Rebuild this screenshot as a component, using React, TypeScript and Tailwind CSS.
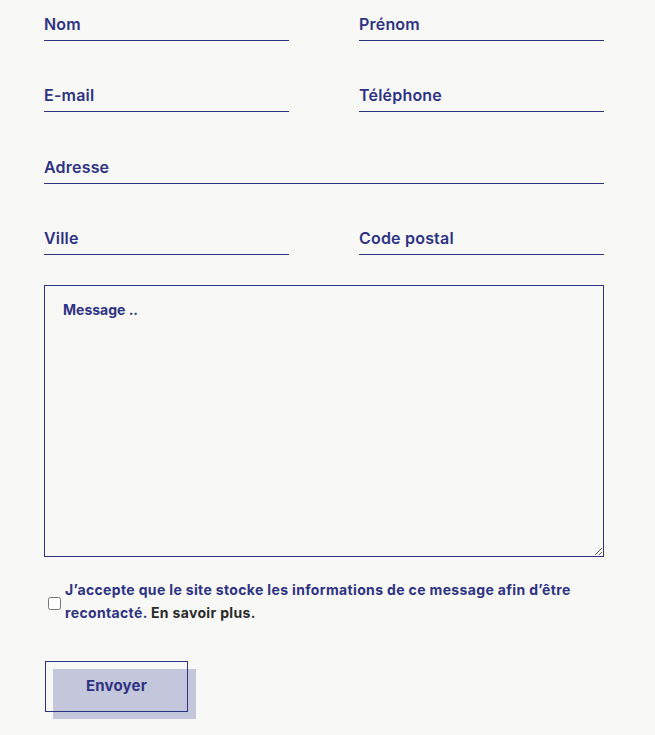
import { useState } from 'react';

const navy = 'text-[#2e3283]';

type FieldProps = {
  label: string;
  className?: string;
};

const Field = ({ label, className }: FieldProps) => {
  return (
    <label className={`block border-b border-[#2e3283] pb-[4px] ${className ?? ''}`}>
      <input
        type="text"
        placeholder={label}
        className={`block h-[24px] w-full bg-transparent text-[16px] font-semibold leading-[24px] tracking-[0.2px] outline-none ${navy} placeholder:text-[#2e3283]`}
      />
    </label>
  );
};

const App = () => {
  const [accepted, setAccepted] = useState<boolean>(false);

  return (
    <div
      className="min-h-screen bg-[#f8f8f6] px-[44px] pt-[12px]"
      style={{ fontFamily: 'Inter, "Noto Sans", sans-serif' }}
    >
      <form className="w-[560px]" onSubmit={(e) => e.preventDefault()}>
        <div className="grid grid-cols-[245px_245px] justify-between gap-y-[42px]">
          <Field label="Nom" />
          <Field label="Prénom" />
          <Field label="E-mail" />
          <Field label="Téléphone" />
          <Field label="Adresse" className="col-span-2 mt-[1px]" />
          <Field label="Ville" />
          <Field label="Code postal" />
        </div>

        {/* message */}
        <textarea
          placeholder="Message .."
          className={`mt-[30px] block h-[272px] w-full border border-[#2e3283] bg-transparent px-[18px] pt-[14px] text-[14px] font-bold leading-[20px] outline-none ${navy} placeholder:text-[#2e3283]`}
        />

        <div className="mt-[21px] flex items-center">
          <input
            type="checkbox"
            checked={accepted}
            onChange={() => setAccepted(!accepted)}
            className="ml-[4px] mr-[4px] mt-[4px] h-[13px] w-[13px] shrink-0 accent-[#2e3283]"
          />
          <p className={`text-[14px] font-bold leading-[23px] tracking-[0.35px] ${navy}`}>
            J’accepte que le site stocke les informations de ce message afin d’être
            <br />
            recontacté. <span className="text-[#2a2b2a]">En savoir plus.</span>
          </p>
        </div>

        <button
          type="submit"
          className={`relative ml-[1px] mt-[37px] h-[51px] w-[143px] text-[15px] font-bold tracking-[0.2px] ${navy}`}
        >
          <span className="absolute left-[8px] top-[8px] h-[50px] w-[143px] bg-[#c4c6dc]" />
          <span className="absolute inset-0 border border-[#2e3283]" />
          <span className="relative">Envoyer</span>
        </button>
      </form>
    </div>
  );
};

export default App;
